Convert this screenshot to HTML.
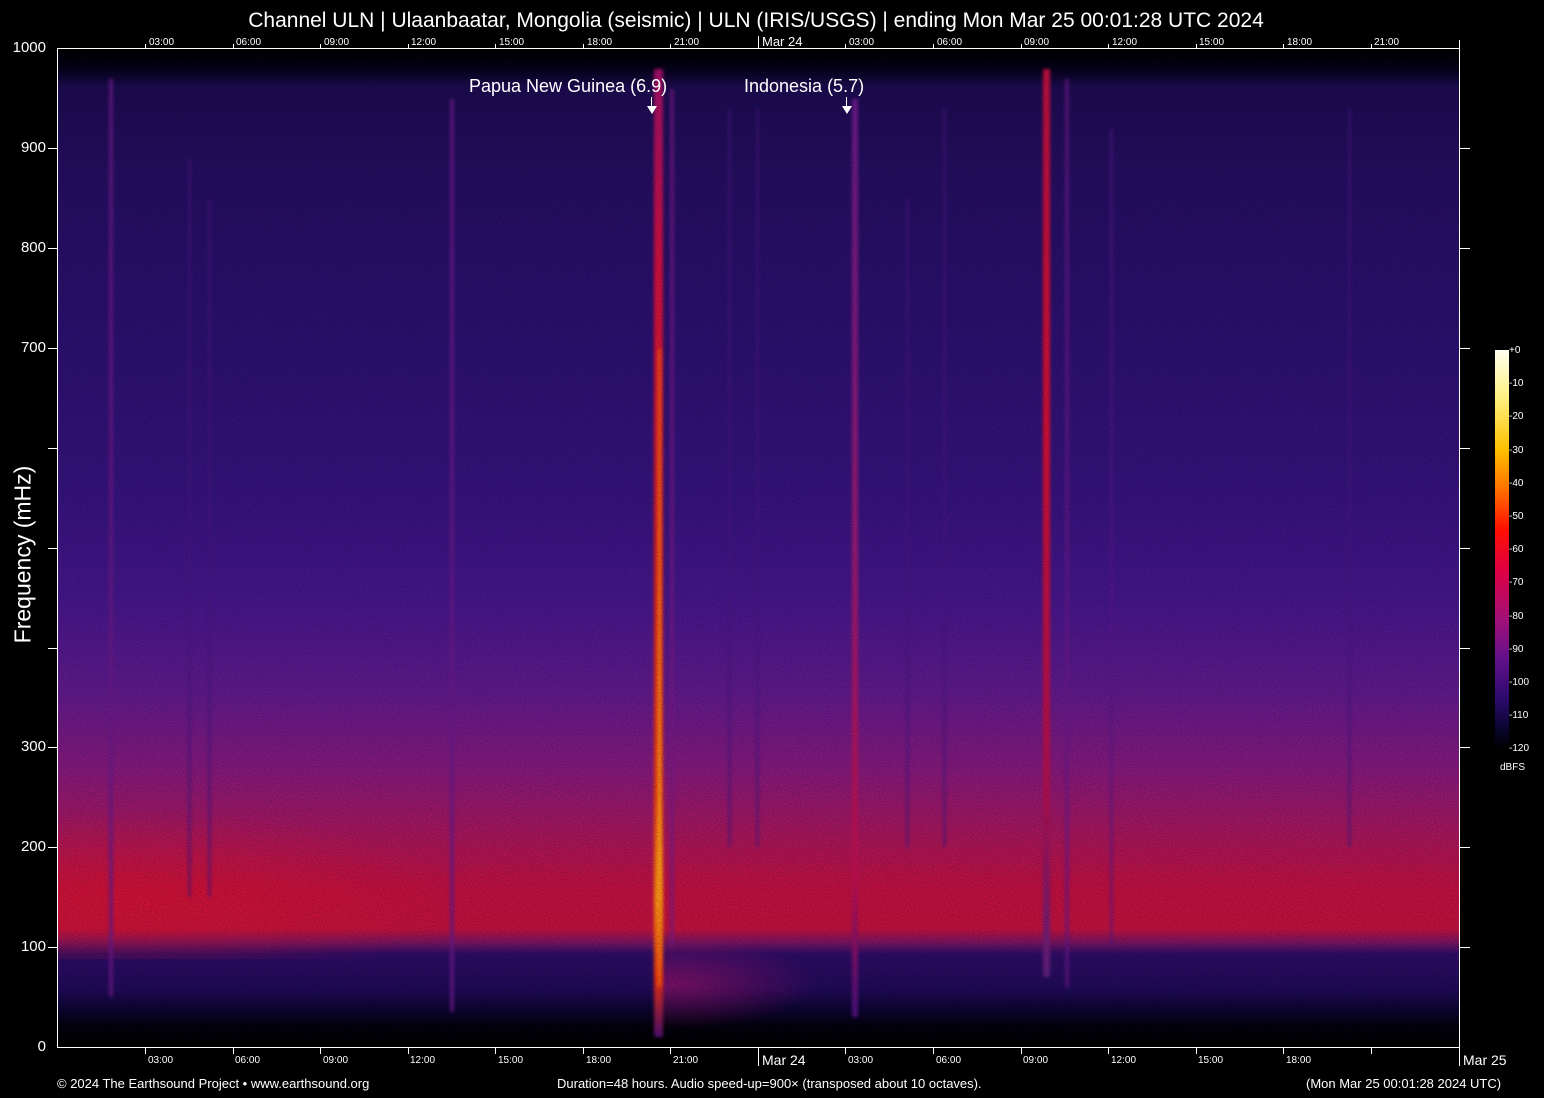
<!DOCTYPE html>
<html><head><meta charset="utf-8"><style>
body{margin:0;background:#000;width:1544px;height:1098px;overflow:hidden;position:relative;font-family:"Liberation Sans",sans-serif;color:#fff}
.a{position:absolute}
#plot{position:absolute;left:58px;top:49px;width:1401px;height:998px;overflow:hidden;
background:linear-gradient(to bottom,#000 0px,#05021a 20px,#1c0b50 38px,#240e60 120px,#2c1070 300px,#36137e 450px,#45168a 550px,#5e1a8c 640px,#84197c 720px,#a8165a 790px,#c01040 840px,#c0123e 880px,#7a1460 893px,#2e0c66 905px,#200a58 940px,#0e0536 958px,#03010c 978px,#000 998px)}
.s{position:absolute;top:30px;bottom:30px;filter:blur(1.5px)}
.t{position:absolute;font-size:10px}
.tb{position:absolute;font-size:10px;top:1055px}
.yl{position:absolute;font-size:15px;right:1498px;width:60px;text-align:right}
.tk{position:absolute;background:#fff}
</style></head><body>
<div class="a" style="left:0;width:1512px;top:9px;text-align:center;font-size:21px">Channel ULN | Ulaanbaatar, Mongolia (seismic) | ULN (IRIS/USGS) | ending Mon Mar 25 00:01:28 UTC 2024</div>
<div id="plot">
<div class="a" style="left:0;top:760px;width:400px;height:150px;background:radial-gradient(ellipse at 20% 60%,rgba(230,20,40,.4),transparent 70%)"></div>
<div class="a" style="left:600px;top:890px;width:160px;height:90px;background:radial-gradient(ellipse at 10% 50%,rgba(190,20,110,.55),transparent 70%)"></div>
<div class="s" style="left:596px;width:9px;top:20px;bottom:10px;background:linear-gradient(to bottom,#a0106a,#d01040 20%,#e02020 50%,#f04010 75%,#ff9010 86%,#f03010 94%,#501070)"></div>
<div class="s" style="left:600px;width:3px;top:300px;bottom:60px;background:linear-gradient(to bottom,#f05010,#ffb020 80%,#f06010)"></div>
<div class="s" style="left:985px;width:7px;top:20px;bottom:70px;background:linear-gradient(to bottom,#c01040,#d81030 40%,#b01050 80%,#602080)"></div>
<div class="s" style="left:794px;width:6px;top:50px;bottom:30px;background:linear-gradient(to bottom,#6a1a8a,#9a1a72 50%,#c01050 85%,#4a1080)"></div>
<div class="s" style="left:392px;width:4px;top:50px;bottom:35px;background:#6a1a8a;opacity:.8"></div>
<div class="s" style="left:51px;width:4px;top:30px;bottom:50px;background:#6a1a88;opacity:.8"></div>
<div class="s" style="left:1007px;width:4px;top:30px;bottom:60px;background:#6a1888;opacity:.7"></div>
<div class="s" style="left:1052px;width:3px;top:80px;bottom:100px;background:#5a1888;opacity:.6"></div>
<div class="s" style="left:612px;width:4px;top:40px;bottom:100px;background:#7a1a88;opacity:.7"></div>
<div class="s" style="left:130px;width:3px;top:110px;bottom:150px;background:#4a1680;opacity:.6"></div>
<div class="s" style="left:150px;width:3px;top:150px;bottom:150px;background:#4a1680;opacity:.6"></div>
<div class="s" style="left:670px;width:3px;top:60px;bottom:200px;background:#4a1680;opacity:.6"></div>
<div class="s" style="left:698px;width:3px;top:60px;bottom:200px;background:#4a1680;opacity:.6"></div>
<div class="s" style="left:848px;width:3px;top:150px;bottom:200px;background:#4a1680;opacity:.6"></div>
<div class="s" style="left:885px;width:3px;top:60px;bottom:200px;background:#4a1680;opacity:.6"></div>
<div class="s" style="left:1290px;width:3px;top:60px;bottom:200px;background:#4a1680;opacity:.6"></div>
<svg class="a" style="left:0;top:0" width="1401" height="998"><filter id="n"><feTurbulence type="fractalNoise" baseFrequency="0.9" numOctaves="1" seed="3"/><feColorMatrix values="0 0 0 0 0 0 0 0 0 0 0 0 0 0 0 0 0 0 -1.6 1"/></filter><rect width="1401" height="998" filter="url(#n)" opacity=".4"/></svg>
</div>
<div class="a" style="left:469px;top:76px;font-size:18px">Papua New Guinea (6.9)</div>
<div class="a" style="left:744px;top:76px;font-size:18px">Indonesia (5.7)</div>
<div class="a" style="left:651px;top:97px;width:1px;height:9px;background:#fff"></div>
<div class="a" style="left:647px;top:106px;border-left:5px solid transparent;border-right:5px solid transparent;border-top:8px solid #fff"></div>
<div class="a" style="left:846px;top:97px;width:1px;height:9px;background:#fff"></div>
<div class="a" style="left:842px;top:106px;border-left:5px solid transparent;border-right:5px solid transparent;border-top:8px solid #fff"></div>
<!-- axes -->
<div class="tk" style="left:57px;top:48px;width:1403px;height:1px"></div>
<div class="tk" style="left:57px;top:48px;width:1px;height:1000px"></div>
<div class="tk" style="left:57px;top:1047px;width:1403px;height:1px"></div>
<div class="tk" style="left:1459px;top:40px;width:1px;height:1012px"></div>
<div class="yl" style="top:39px">1000</div><div class="yl" style="top:139px">900</div><div class="yl" style="top:239px">800</div><div class="yl" style="top:339px">700</div><div class="yl" style="top:738px">300</div><div class="yl" style="top:838px">200</div><div class="yl" style="top:938px">100</div><div class="yl" style="top:1038px">0</div>
<div class="tk" style="left:48px;top:148px;width:10px;height:1px"></div><div class="tk" style="left:48px;top:248px;width:10px;height:1px"></div><div class="tk" style="left:48px;top:348px;width:10px;height:1px"></div><div class="tk" style="left:48px;top:448px;width:10px;height:1px"></div><div class="tk" style="left:48px;top:548px;width:10px;height:1px"></div><div class="tk" style="left:48px;top:648px;width:10px;height:1px"></div><div class="tk" style="left:48px;top:747px;width:10px;height:1px"></div><div class="tk" style="left:48px;top:847px;width:10px;height:1px"></div><div class="tk" style="left:48px;top:947px;width:10px;height:1px"></div>
<div class="tk" style="left:1460px;top:148px;width:10px;height:1px"></div><div class="tk" style="left:1460px;top:248px;width:10px;height:1px"></div><div class="tk" style="left:1460px;top:348px;width:10px;height:1px"></div><div class="tk" style="left:1460px;top:448px;width:10px;height:1px"></div><div class="tk" style="left:1460px;top:548px;width:10px;height:1px"></div><div class="tk" style="left:1460px;top:648px;width:10px;height:1px"></div><div class="tk" style="left:1460px;top:747px;width:10px;height:1px"></div><div class="tk" style="left:1460px;top:847px;width:10px;height:1px"></div><div class="tk" style="left:1460px;top:947px;width:10px;height:1px"></div>
<div class="a" style="left:-92px;top:541px;width:230px;text-align:center;font-size:23px;transform:rotate(-90deg)">Frequency (mHz)</div>
<!-- top time ticks -->
<div class="tk" style="left:145px;top:44px;width:1px;height:5px"></div><div class="tk" style="left:233px;top:44px;width:1px;height:5px"></div><div class="tk" style="left:320px;top:44px;width:1px;height:5px"></div><div class="tk" style="left:408px;top:44px;width:1px;height:5px"></div><div class="tk" style="left:495px;top:44px;width:1px;height:5px"></div><div class="tk" style="left:583px;top:44px;width:1px;height:5px"></div><div class="tk" style="left:670px;top:44px;width:1px;height:5px"></div><div class="tk" style="left:758px;top:36px;width:1px;height:13px"></div><div class="tk" style="left:845px;top:44px;width:1px;height:5px"></div><div class="tk" style="left:933px;top:44px;width:1px;height:5px"></div><div class="tk" style="left:1021px;top:44px;width:1px;height:5px"></div><div class="tk" style="left:1108px;top:44px;width:1px;height:5px"></div><div class="tk" style="left:1196px;top:44px;width:1px;height:5px"></div><div class="tk" style="left:1283px;top:44px;width:1px;height:5px"></div><div class="tk" style="left:1371px;top:44px;width:1px;height:5px"></div>
<div class="t" style="left:149px;top:37px">03:00</div><div class="t" style="left:236px;top:37px">06:00</div><div class="t" style="left:324px;top:37px">09:00</div><div class="t" style="left:411px;top:37px">12:00</div><div class="t" style="left:499px;top:37px">15:00</div><div class="t" style="left:587px;top:37px">18:00</div><div class="t" style="left:674px;top:37px">21:00</div><div class="t" style="left:762px;top:34px;font-size:13px">Mar 24</div><div class="t" style="left:849px;top:37px">03:00</div><div class="t" style="left:937px;top:37px">06:00</div><div class="t" style="left:1024px;top:37px">09:00</div><div class="t" style="left:1112px;top:37px">12:00</div><div class="t" style="left:1199px;top:37px">15:00</div><div class="t" style="left:1287px;top:37px">18:00</div><div class="t" style="left:1374px;top:37px">21:00</div>
<!-- bottom time ticks -->
<div class="tk" style="left:145px;top:1048px;width:1px;height:6px"></div><div class="tk" style="left:233px;top:1048px;width:1px;height:6px"></div><div class="tk" style="left:320px;top:1048px;width:1px;height:6px"></div><div class="tk" style="left:408px;top:1048px;width:1px;height:6px"></div><div class="tk" style="left:495px;top:1048px;width:1px;height:6px"></div><div class="tk" style="left:583px;top:1048px;width:1px;height:6px"></div><div class="tk" style="left:670px;top:1048px;width:1px;height:6px"></div><div class="tk" style="left:758px;top:1048px;width:1px;height:18px"></div><div class="tk" style="left:845px;top:1048px;width:1px;height:6px"></div><div class="tk" style="left:933px;top:1048px;width:1px;height:6px"></div><div class="tk" style="left:1021px;top:1048px;width:1px;height:6px"></div><div class="tk" style="left:1108px;top:1048px;width:1px;height:6px"></div><div class="tk" style="left:1196px;top:1048px;width:1px;height:6px"></div><div class="tk" style="left:1283px;top:1048px;width:1px;height:6px"></div><div class="tk" style="left:1371px;top:1048px;width:1px;height:6px"></div><div class="tk" style="left:1459px;top:1048px;width:1px;height:18px"></div>
<div class="tb" style="left:148px">03:00</div><div class="tb" style="left:235px">06:00</div><div class="tb" style="left:323px">09:00</div><div class="tb" style="left:410px">12:00</div><div class="tb" style="left:498px">15:00</div><div class="tb" style="left:586px">18:00</div><div class="tb" style="left:673px">21:00</div><div class="tb" style="left:762px;top:1052px;font-size:14px">Mar 24</div><div class="tb" style="left:848px">03:00</div><div class="tb" style="left:936px">06:00</div><div class="tb" style="left:1023px">09:00</div><div class="tb" style="left:1111px">12:00</div><div class="tb" style="left:1198px">15:00</div><div class="tb" style="left:1286px">18:00</div><div class="tb" style="left:1463px;top:1052px;font-size:14px">Mar 25</div>
<div class="a" style="left:57px;top:1076px;font-size:13px">© 2024 The Earthsound Project • www.earthsound.org</div>
<div class="a" style="left:557px;top:1076px;font-size:13px">Duration=48 hours. Audio speed-up=900× (transposed about 10 octaves).</div>
<div class="a" style="left:1306px;top:1076px;font-size:13px">(Mon Mar 25 00:01:28 2024 UTC)</div>
<!-- colorbar -->
<div class="a" style="left:1495px;top:350px;width:14px;height:398px;background:linear-gradient(to bottom,#fffff0,#fff080 12%,#ffc000 25%,#ff7000 35%,#ff1000 45%,#e00040 55%,#a0107a 68%,#60108a 78%,#2a0a6a 88%,#0a0530 95%,#000)"></div>
<div class="a" style="left:1509px;top:334px;font-size:10px;line-height:33.2px">+0<br>-10<br>-20<br>-30<br>-40<br>-50<br>-60<br>-70<br>-80<br>-90<br>-100<br>-110<br>-120</div>
<div class="a" style="left:1500px;top:762px;font-size:10px">dBFS</div>
</body></html>
